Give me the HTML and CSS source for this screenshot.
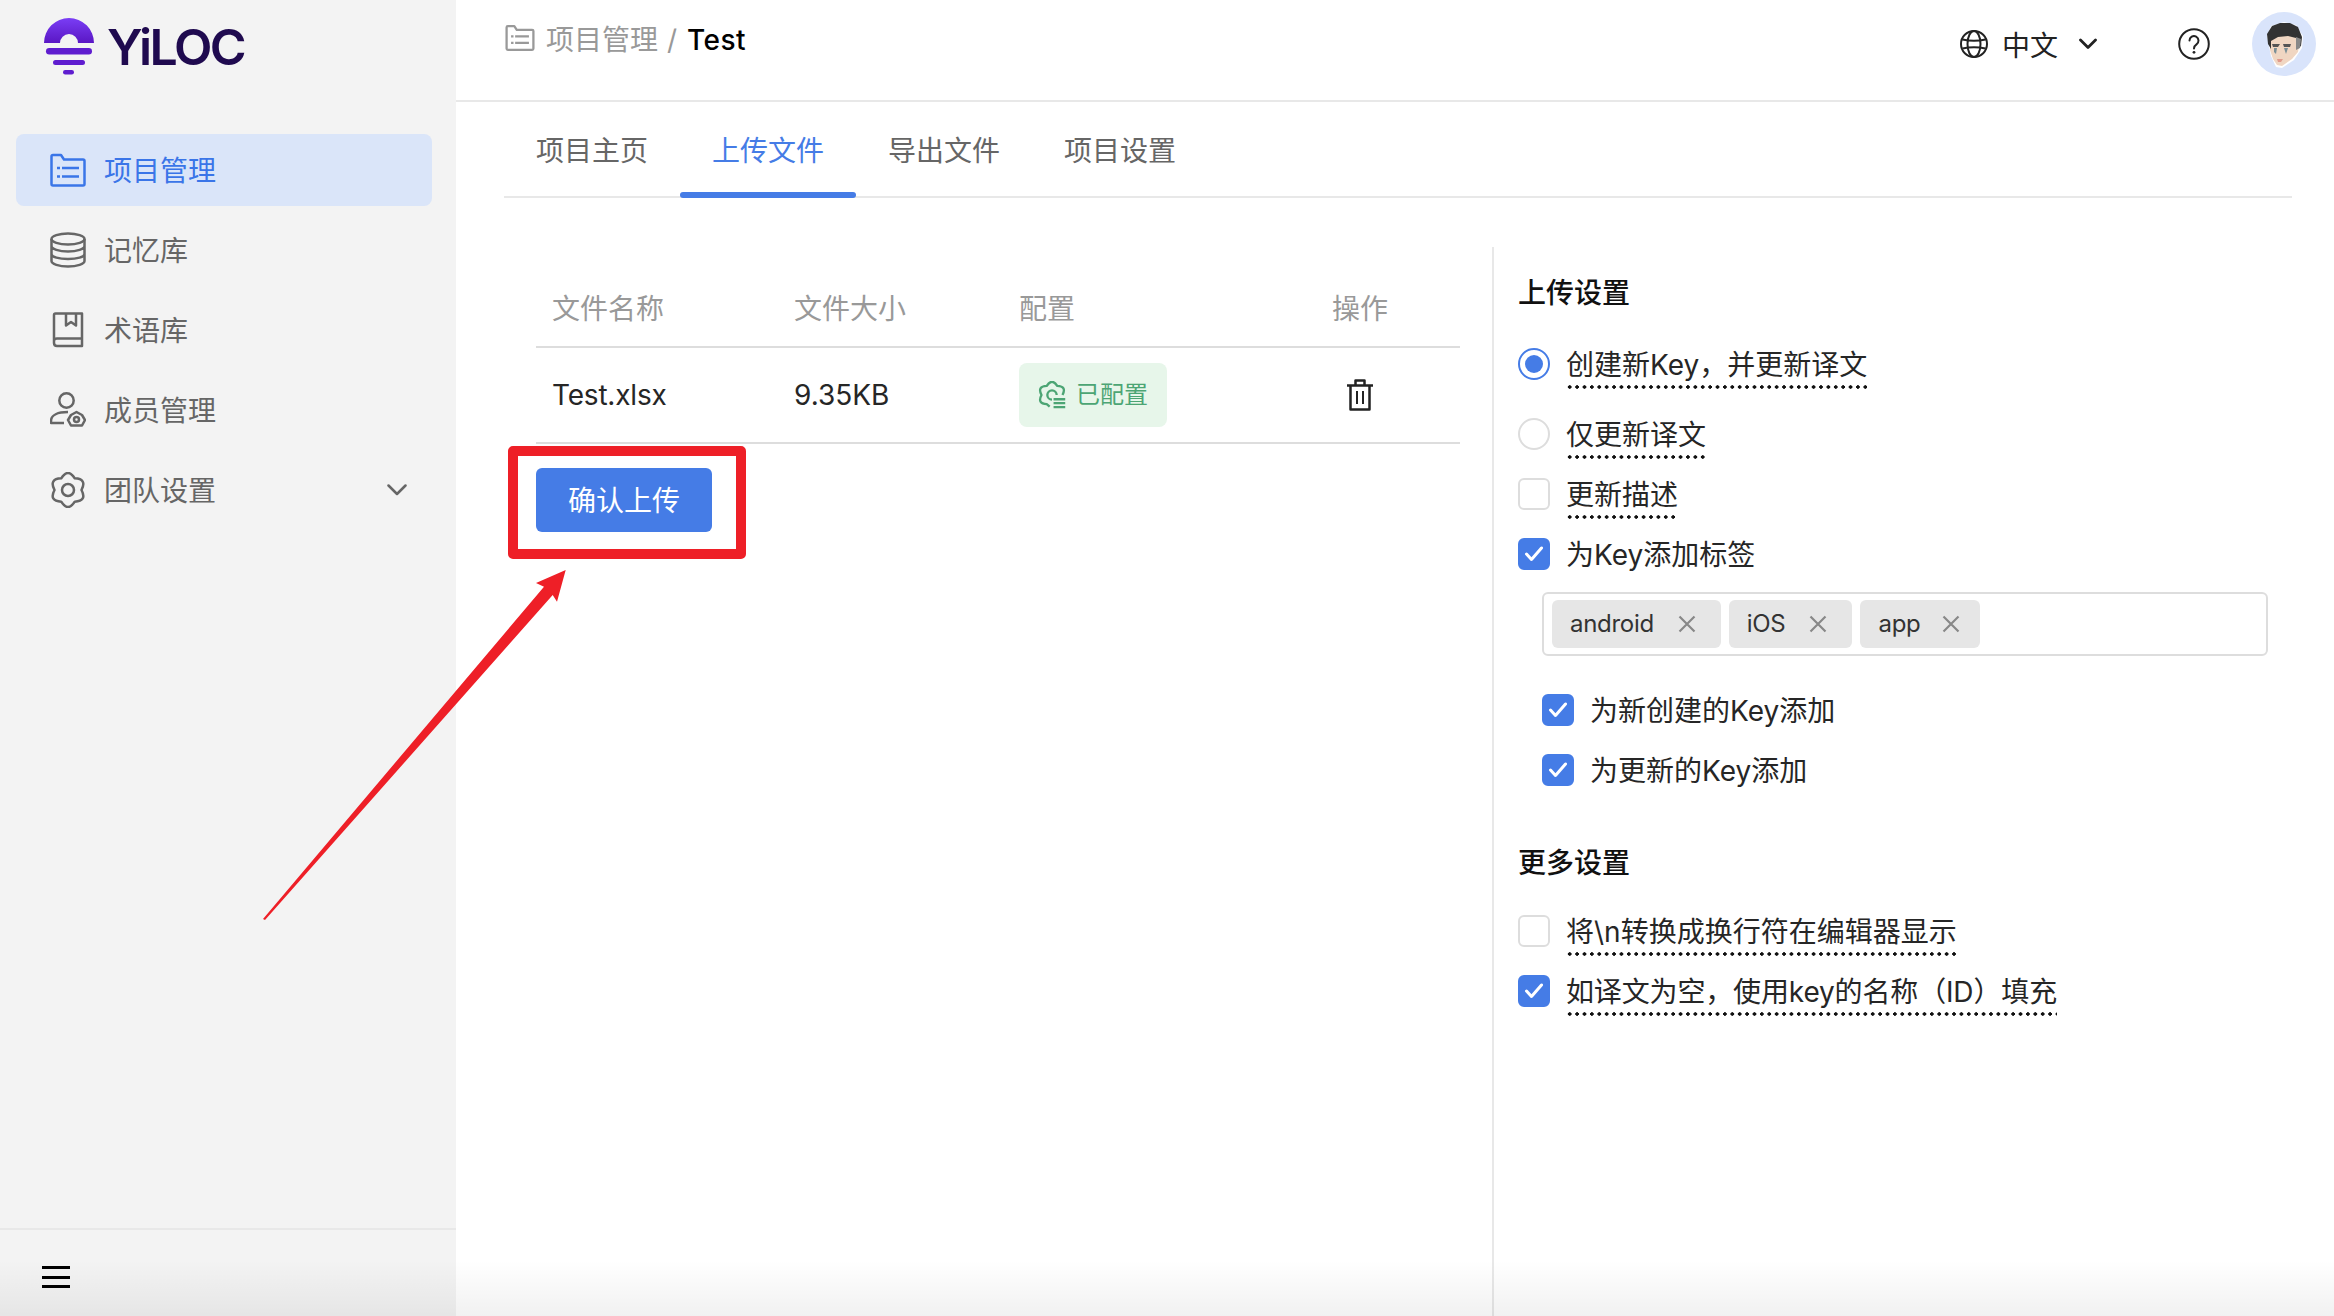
FILE: index.html
```html
<!DOCTYPE html>
<html lang="zh-CN">
<head>
<meta charset="utf-8">
<title>YiLOC - 上传文件</title>
<link rel="stylesheet" href="styles.css">
</head>
<body>
<div class="app">
  <aside class="sidebar">
    <div class="logo">
      <svg class="logo-mark" width="50" height="58" viewBox="0 0 50 58">
        <defs><linearGradient id="sun" x1="0" y1="0" x2="0" y2="1"><stop offset="0" stop-color="#7a3df5"/><stop offset="1" stop-color="#5a17c4"/></linearGradient></defs>
        <path d="M0 25A25 25 0 0 1 50 25H34A9 9 0 0 0 16 25Z" fill="url(#sun)"/>
        <rect x="2" y="30" width="46" height="6.5" rx="3.2" fill="#5f1dcf"/>
        <rect x="9" y="42" width="32" height="5" rx="2.5" fill="#5f1dcf"/>
        <rect x="19" y="52" width="11" height="4.5" rx="2.2" fill="#5f1dcf"/>
      </svg>
      <span class="logo-text">YiLOC</span>
    </div>
    <nav class="nav">
      <a class="nav-item active">
        <svg class="nav-icon" width="36" height="36" viewBox="0 0 36 36" fill="none" stroke="currentColor" stroke-width="2.5" stroke-linejoin="round"><path d="M1.5 4.5Q1.5 3 3 3H11L14 7.5H33Q34.5 7.5 34.5 9V32Q34.5 33.5 33 33.5H3Q1.5 33.5 1.5 32Z"/><path d="M12 16H29M12 24.5H29M7 16H10M7 24.5H10"/></svg>
        <span class="nav-label">项目管理</span>
      </a>
      <a class="nav-item">
        <svg class="nav-icon" width="36" height="36" viewBox="0 0 36 36" fill="none" stroke="currentColor" stroke-width="2.5"><ellipse cx="18" cy="7" rx="16.5" ry="5.5"/><path d="M1.5 7V29C1.5 32 9 34.5 18 34.5S34.5 32 34.5 29V7M1.5 14C1.5 17 9 19.5 18 19.5S34.5 17 34.5 14M1.5 22C1.5 25 9 27 18 27S34.5 25 34.5 22"/></svg>
        <span class="nav-label">记忆库</span>
      </a>
      <a class="nav-item">
        <svg class="nav-icon" width="36" height="36" viewBox="0 0 36 36" fill="none" stroke="currentColor" stroke-width="2.5" stroke-linejoin="round"><path d="M4 29V3Q4 1.5 5.5 1.5H32V34H7Q4 34 4 31V29Q4 26.500 7 26.500H32"/><path d="M16 1.500V13.500L21 10L26 13.500V1.500"/></svg>
        <span class="nav-label">术语库</span>
      </a>
      <a class="nav-item">
        <svg class="nav-icon" width="36" height="36" viewBox="0 0 36 36" fill="none" stroke="currentColor" stroke-width="2.5" stroke-linejoin="round"><circle cx="16.500" cy="8.500" r="7.200"/><path d="M18 20C8 20 1 23 1 29V31H14"/><path d="M22 23L27.500 20L33 23L36 28L33 33.500H22L19 28Z" transform="translate(-1 0)"/><circle cx="26.500" cy="27.500" r="2.500"/></svg>
        <span class="nav-label">成员管理</span>
      </a>
      <a class="nav-item">
        <svg class="nav-icon" width="36" height="36" viewBox="0 0 36 36" fill="none" stroke="currentColor" stroke-width="2.500" stroke-linejoin="round"><path d="M11.250 6.310Q18 -4.300 24.750 6.310Q37.300 6.850 31.500 18Q37.300 29.150 24.750 29.690Q18 40.300 11.250 29.690Q-1.300 29.150 4.500 18Q-1.300 6.850 11.250 6.310Z"/><circle cx="18" cy="18" r="6"/></svg>
        <span class="nav-label">团队设置</span>
        <svg class="nav-caret" width="20" height="12" viewBox="0 0 20 12" fill="none" stroke="currentColor" stroke-width="2.500" stroke-linecap="round" stroke-linejoin="round"><path d="M1.500 1.500L10 10L18.500 1.500"/></svg>
      </a>
    </nav>
    <div class="side-foot">
      <svg width="28" height="24" viewBox="0 0 28 24" fill="#000"><rect y="1" width="28" height="3"/><rect y="11" width="28" height="3"/><rect y="20" width="28" height="3"/></svg>
    </div>
  </aside>

  <main class="main">
    <header class="topbar">
      <div class="crumbs">
        <svg class="crumb-icon" width="30" height="26" viewBox="0 0 36 32" fill="none" stroke="currentColor" stroke-width="2.800" stroke-linejoin="round"><path d="M1.500 3Q1.500 1.500 3 1.500H11L14 6H33Q34.500 6 34.500 7.500V29Q34.500 30.500 33 30.500H3Q1.500 30.500 1.500 29Z"/><path d="M12 14H29M12 22H29M7 14H10M7 22H10"/></svg>
        <span class="crumb-link">项目管理</span>
        <span class="crumb-sep">/</span>
        <span class="crumb-now">Test</span>
      </div>
      <div class="top-actions">
        <div class="lang">
          <svg width="28" height="28" viewBox="0 0 28 28" fill="none" stroke="#222" stroke-width="2"><circle cx="14" cy="14" r="13"/><ellipse cx="14" cy="14" rx="6.500" ry="13"/><path d="M2.500 9.500Q14 12 25.500 9.500M2.500 18.500Q14 16 25.500 18.500"/></svg>
          <span class="lang-label">中文</span>
          <svg class="lang-caret" width="18" height="12" viewBox="0 0 18 12" fill="none" stroke="#222" stroke-width="2.800" stroke-linecap="round" stroke-linejoin="round"><path d="M1.500 2L9 9.500L16.500 2"/></svg>
        </div>
        <svg class="help" width="32" height="32" viewBox="0 0 32 32" fill="none" stroke="#222" stroke-width="2"><circle cx="16" cy="16" r="14.800"/><path d="M11.500 12.500A4.500 4.500 0 1 1 18.500 16.300Q16 18 16 20.500" stroke-linecap="round"/><circle cx="16" cy="24.300" r="1.400" fill="#222" stroke="none"/></svg>
        <svg class="avatar" width="64" height="64" viewBox="0 0 64 64">
          <defs><filter id="soft" x="-10%" y="-10%" width="120%" height="120%"><feGaussianBlur stdDeviation="0.700"/></filter></defs>
          <circle cx="32" cy="32" r="32" fill="#d9e4fb"/>
          <g filter="url(#soft)">
            <path d="M15 24L19 14L32 10L44 13L51 24L50 36L42 48L30 56L24 55L19 44Z" fill="#fff"/>
            <path d="M18 38L18 26L24 24H42L48 30L46 40L40 47L30 54L25 53L21 47Z" fill="#f0d6c2"/>
            <path d="M16 32L15 22L20 14L28 11L38 11L46 15L50 25L49 34L46 36L44 26L36 24L26 25L19 29L19 37Z" fill="#333"/>
            <path d="M44 25L49 27L48 36L44 38Z" fill="#888"/>
            <path d="M20 32H28L26 35H21Z M31 32H39L38 35H32Z" fill="#555"/>
            <path d="M22 36L25 36L24 42L22 40Z M32 36H36L34 42Z" fill="#7b9097"/>
            <path d="M25 47H31L29 50H26Z" fill="#e09a8c"/>
          </g>
        </svg>
      </div>
    </header>

    <div class="content">
      <div class="tabs">
        <a class="tab">项目主页</a>
        <a class="tab active">上传文件</a>
        <a class="tab">导出文件</a>
        <a class="tab">项目设置</a>
      </div>

      <div class="workspace">
        <section class="files">
          <table class="file-table">
            <thead>
              <tr><th class="c-name">文件名称</th><th class="c-size">文件大小</th><th class="c-conf">配置</th><th class="c-op">操作</th></tr>
            </thead>
            <tbody>
              <tr>
                <td class="c-file">Test.xlsx</td>
                <td>9.35KB</td>
                <td class="c-conf">
                  <span class="status">
                    <svg width="28" height="28" viewBox="0 0 36 36" fill="none" stroke="currentColor" stroke-width="3" stroke-linejoin="round"><path d="M15 33L11.250 29.690Q-1.300 29.150 4.500 18Q-1.300 6.850 11.250 6.310Q18 -4.300 24.750 6.310Q37.300 6.850 31.500 18"/><path d="M18 24A6 6 0 1 1 24 18"/><path d="M20 23.500H35M20 28.500H35M20 33.500H35"/></svg>
                    <span>已配置</span>
                  </span>
                </td>
                <td class="c-op">
                  <svg class="trash" width="26" height="32" viewBox="0 0 26 32" fill="none" stroke="#222" stroke-width="2.500" stroke-linejoin="round"><path d="M8.500 6V1.500H17.500V6M0 6.500H26M3.500 6.500V30.500H22.500V6.500"/><path d="M10 12V25M16 12V25" stroke-width="2"/></svg>
                </td>
              </tr>
            </tbody>
          </table>
          <div class="confirm">
            <button class="btn-primary" type="button">确认上传</button>
            <span class="callout"></span>
          </div>
        </section>

        <section class="settings">
          <h3 class="set-title">上传设置</h3>
          <div class="opt opt-first"><span class="radio on"></span><span class="hint">创建新Key，并更新译文</span></div>
          <div class="opt opt-radio2"><span class="radio"></span><span class="hint">仅更新译文</span></div>
          <div class="opt"><span class="check"></span><span class="hint">更新描述</span></div>
          <div class="opt"><span class="check on"><svg width="20" height="16" viewBox="0 0 20 16" fill="none" stroke="#fff" stroke-width="3" stroke-linecap="round" stroke-linejoin="round"><path d="M2.500 8L7.500 13.500L17.500 2"/></svg></span><span class="plain">为Key添加标签</span></div>
          <div class="tagbox">
            <span class="chip">android<svg width="18" height="18" viewBox="0 0 18 18" stroke="#888" stroke-width="2.200" fill="none"><path d="M1.500 1.500L16.500 16.500M16.500 1.500L1.500 16.500"/></svg></span>
            <span class="chip">iOS<svg width="18" height="18" viewBox="0 0 18 18" stroke="#888" stroke-width="2.200" fill="none"><path d="M1.500 1.500L16.500 16.500M16.500 1.500L1.500 16.500"/></svg></span>
            <span class="chip chip-app">app<svg width="18" height="18" viewBox="0 0 18 18" stroke="#888" stroke-width="2.200" fill="none"><path d="M1.500 1.500L16.500 16.500M16.500 1.500L1.500 16.500"/></svg></span>
          </div>
          <div class="opt sub sub-first"><span class="check on"><svg width="20" height="16" viewBox="0 0 20 16" fill="none" stroke="#fff" stroke-width="3" stroke-linecap="round" stroke-linejoin="round"><path d="M2.500 8L7.500 13.500L17.500 2"/></svg></span><span class="plain">为新创建的Key添加</span></div>
          <div class="opt sub"><span class="check on"><svg width="20" height="16" viewBox="0 0 20 16" fill="none" stroke="#fff" stroke-width="3" stroke-linecap="round" stroke-linejoin="round"><path d="M2.500 8L7.500 13.500L17.500 2"/></svg></span><span class="plain">为更新的Key添加</span></div>
          <h3 class="set-title set-title-more">更多设置</h3>
          <div class="opt opt-more"><span class="check"></span><span class="hint">将\n转换成换行符在编辑器显示</span></div>
          <div class="opt"><span class="check on"><svg width="20" height="16" viewBox="0 0 20 16" fill="none" stroke="#fff" stroke-width="3" stroke-linecap="round" stroke-linejoin="round"><path d="M2.500 8L7.500 13.500L17.500 2"/></svg></span><span class="hint tight">如译文为空，使用key的名称（ID）填充</span></div>
        </section>
      </div>
    </div>
  </main>

  <svg class="arrow" width="310" height="360" viewBox="0 0 310 360"><polygon points="3,354 284,21.700 276,18 305.700,5 297,36.700 292.700,30 5,355" fill="#ee1f27"/></svg>
  <div class="page-fade"></div>
</div>
</body>
</html>
```

FILE: styles.css
```css
* { box-sizing: border-box; }
html, body { margin: 0; padding: 0; }
body {
  width: 2334px;
  height: 1316px;
  overflow: hidden;
  background: #fff;
  color: #262626;
  font-family: Inter, "Noto Sans CJK SC", sans-serif;
  font-size: 28px;
  line-height: 40px;
}
.app { position: relative; display: flex; width: 2334px; height: 1316px; overflow: hidden; }

/* sidebar */
.sidebar { display: flex; flex-direction: column; flex: 0 0 456px; background: #f3f3f3; }
.logo { display: flex; align-items: flex-start; gap: 13px; height: 134px; padding: 18px 0 0 44px; }
.logo-mark { flex: none; }
.logo-text { font-size: 50px; line-height: 60px; font-weight: 600; letter-spacing: -2.500px; color: #1f0a4f; margin-top: -1px; }
.nav { flex: 1; display: flex; flex-direction: column; gap: 8px; padding: 0 24px 0 16px; }
.nav-item { display: flex; align-items: center; height: 72px; padding: 0 25px 0 34px; gap: 18px; border-radius: 8px; color: #666; }
.nav-item.active { background: #dae5f9; color: #3a75e8; }
.nav-icon { flex: none; }
.nav-label { padding-top: 2px; }
.nav-caret { margin-left: auto; color: #666; }
.side-foot { display: flex; align-items: center; height: 88px; padding: 8px 0 0 42px; border-top: 2px solid #e8e8e8; }

/* main */
.main { flex: 1; min-width: 0; display: flex; flex-direction: column; }
.topbar { display: flex; align-items: center; justify-content: space-between; height: 102px; padding: 0 18px 12px 49px; border-bottom: 2px solid #e8e8e8; }
.crumbs { display: flex; align-items: center; margin-bottom: 12px; color: #999; }
.crumb-icon { margin-right: 11px; }
.crumb-link, .crumb-sep, .crumb-now { padding-top: 3px; }
.crumb-sep { margin: 0 10px 0 9px; font-size: 28px; }
.crumb-now { color: #000; font-weight: 500; letter-spacing: 0.4px; }
.top-actions { display: flex; align-items: center; }
.lang { display: flex; align-items: center; gap: 14px; color: #222; }
.lang-label { padding-top: 3px; }
.lang-caret { margin-left: 7px; }
.help { margin-left: 81px; }
.avatar { margin-left: 42px; }

.content { flex: 1; display: flex; flex-direction: column; padding: 0 42px 0 48px; min-height: 0; }
.tabs { display: flex; height: 96px; border-bottom: 2px solid #e8e8e8; }
.tab { position: relative; display: block; width: 176px; padding-top: 29px; text-align: center; color: #666; }
.tab.active { color: #457ce6; }
.tab.active::after { content: ""; position: absolute; left: 0; right: 0; bottom: -2px; height: 6px; border-radius: 3px; background: #457ce6; }

.workspace { flex: 1; display: flex; min-height: 0; }
.files { flex: 0 0 988px; padding: 72px 32px 0; }
.file-table { width: 924px; border-collapse: separate; border-spacing: 0; table-layout: fixed; }
.file-table th { height: 78px; padding: 2px 0 0 16px; border-bottom: 2px solid #ddd; text-align: left; font-weight: 400; color: #999; }
.file-table td { height: 96px; padding: 0 0 0 16px; border-bottom: 2px solid #ddd; }
.c-name { width: 242px; }
.c-size { width: 226px; }
.c-conf { width: 256px; }
.c-file { letter-spacing: -0.2px; }
.file-table .c-conf { padding-left: 15px; }
.file-table .c-op { padding-left: 0; text-align: center; }
.status { display: inline-flex; align-items: center; gap: 10px; width: 148px; height: 64px; padding-left: 19px; border-radius: 8px; background: #e7f6ea; color: #4ca574; font-size: 24px; vertical-align: middle; }
.trash { display: block; margin: 0 auto; }
.confirm { position: relative; width: 176px; margin-top: 24px; }
.btn-primary { display: block; width: 176px; height: 64px; padding: 2px 0 0; border: 0; border-radius: 6px; background: #457ce6; color: #fff; font: inherit; }
.callout { position: absolute; left: -28px; top: -22px; width: 238px; height: 113px; border: 10px solid #ee1f27; border-radius: 5px; }

.settings { flex: 1; margin-top: 49px; padding: 25px 0 0 24px; border-left: 2px solid #e8e8e8; }
.set-title { height: 40px; margin: 0; padding-top: 1px; font-size: 28px; line-height: 40px; font-weight: 500; color: #111; }
.set-title-more { margin-top: 52px; }
.opt { display: flex; align-items: center; gap: 16px; height: 40px; margin-top: 20px; }
.opt-first { margin-top: 32px; }
.opt-radio2 { margin-top: 30px; }
.opt-more { margin-top: 29px; }
.sub { margin-left: 24px; }
.sub-first { margin-top: 34px; }
.plain { padding-top: 2px; }
.hint { margin-top: 7px; padding-bottom: 6px; line-height: 36px; background: radial-gradient(circle, #111 1.5px, rgba(17,17,17,0) 2px) left bottom / 7.400px 4px repeat-x; }
.tight { letter-spacing: -0.15px; }
.radio { flex: none; display: flex; align-items: center; justify-content: center; width: 32px; height: 32px; border: 2px solid #ddd; border-radius: 50%; background: #fff; }
.radio.on { border-color: #457ce6; }
.radio.on::after { content: ""; width: 18px; height: 18px; border-radius: 50%; background: #457ce6; }
.check { flex: none; display: flex; align-items: center; justify-content: center; width: 32px; height: 32px; border: 2px solid #ddd; border-radius: 6px; background: #fff; }
.check.on { border-color: #457ce6; background: #457ce6; }
.tagbox { display: flex; align-items: center; gap: 8px; width: 726px; height: 64px; margin: 18px 0 0 24px; padding: 0 8px; border: 2px solid #ddd; border-radius: 6px; }
.chip { display: inline-flex; align-items: center; gap: 24px; height: 48px; padding: 0 25px 0 18px; border-radius: 6px; background: #e6e6e6; font-size: 24px; letter-spacing: -0.3px; color: #333; }
.chip-app { gap: 22px; padding-right: 20px; }

/* annotation and bottom fade */
.arrow { position: absolute; left: 260px; top: 565px; }
.page-fade { position: absolute; left: 0; right: 0; bottom: 0; height: 56px; background: linear-gradient(rgba(0,0,0,0), rgba(0,0,0,.055)); pointer-events: none; }
```
